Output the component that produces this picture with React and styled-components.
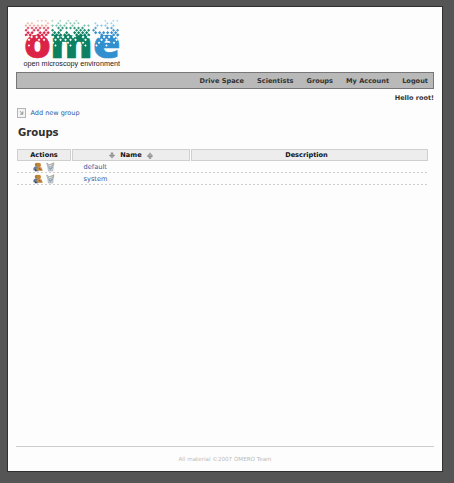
import React from "react";
import styled, { createGlobalStyle } from "styled-components";

const GlobalStyle = createGlobalStyle`
  * { box-sizing: border-box; }
  html, body { margin: 0; background: #555; }
  body { font-family: "DejaVu Sans", Verdana, sans-serif; font-size: 6.6px; color: #333; }
`;
const Page = styled.div`
  width: 454px;
  height: 483px;
  padding: 6px 0 0 7px;
  background: #555;
  overflow: hidden;
`;
const Panel = styled.main`
  width: 436px;
  height: 466px;
  border: 1px solid #303030;
  background: #fdfdfd;
  padding: 9px 8px 0 8px;
  display: flex;
  flex-direction: column;
`;
const LogoArea = styled.header`
  height: 56px;
  padding-left: 4px;
  svg { display: block; overflow: visible; }
`;
const NavBar = styled.nav`
  height: 17px;
  flex: none;
  border: 1px solid #777;
  background: #b9b9b9;
  display: flex;
  justify-content: flex-end;
  align-items: center;
  gap: 13px;
  padding-right: 5px;
`;
const NavLink = styled.a`
  font-size: 6.6px;
  font-weight: bold;
  line-height: 15px;
  padding-top: 1px;
  color: #333;
  white-space: nowrap;
`;
const Greeting = styled.div`
  height: 19px;
  line-height: 18px;
  text-align: right;
  font-size: 6.5px;
  font-weight: bold;
`;
const AddGroup = styled.a`
  display: flex;
  align-items: center;
  gap: 4.5px;
  height: 10px;
  padding-left: 1px;
  font-size: 6.5px;
  color: #2f599f;
`;
const Title = styled.h1`
  margin: 8px 0 0 2px;
  height: 23px;
  line-height: 13px;
  font-size: 10.1px;
  color: #303030;
`;
const Table = styled.section`
  width: 411px;
  margin-left: 1px;
`;
const HeaderRow = styled.div`
  display: grid;
  grid-template-columns: 54px 118px 237px;
  gap: 1px;
`;
const HeaderCell = styled.div`
  height: 12px;
  border: 1px solid #cfcfcf;
  background: #ededed;
  display: flex;
  align-items: center;
  justify-content: center;
  gap: 5px;
  padding-right: ${(p) => p.$shift || 0}px;
  font-weight: bold;
  color: #111;
`;
const Row = styled.div`
  height: 12px;
  display: grid;
  grid-template-columns: 66.6px 1fr;
  align-items: center;
  background: repeating-linear-gradient(90deg, #cdcdcd 0 2px, transparent 2px 4px) left bottom / 100% 1px no-repeat;
`;
const Actions = styled.div`
  display: flex;
  gap: 3px;
  padding-left: 16px;
`;
const GroupLink = styled.a`
  line-height: 10px;
  color: #2f599f;
`;
const Footer = styled.footer`
  margin-top: auto;
  height: 25px;
  border-top: 1px solid #ccc;
  line-height: 24px;
  text-align: center;
  font-size: 5.6px;
  color: #bbb;
`;

const RED = "#dc2346";
const GREEN = "#0c8060";
const BLUE = "#308fce";

const noise = (a, b) => {
  const n = Math.sin(a * 127.1 + b * 311.7) * 43758.5453;
  return n - Math.floor(n);
};

const clusters = [
  { from: 1.5, to: 25.5, color: RED, top: "#ee8872" },
  { from: 28, to: 65, color: GREEN, top: "#45a987" },
  { from: 69, to: 95, color: BLUE, top: "#54b5e6" },
];

function buildPixels() {
  const out = [];
  clusters.forEach((c, k) => {
    for (let r = 0; r < 7; r++) {
      const y = 4 + r * 2.3;
      for (let x = c.from + (r % 2) * 2; x < c.to; x += 4) {
        if (noise(x + k, r) < 0.55 + r * 0.05) {
          const s = 1.7 + r * 0.12;
          out.push({ x, y, s, fill: r < 3 ? c.top : c.color, opacity: Math.min(1, 0.45 + r * 0.11) });
        }
      }
    }
    for (let r = 0; r < 4; r++) {
      for (let x = c.from + 0.6 + (r % 2) * 2.5; x < c.to; x += 5) {
        if (noise(x, r + 30) < 0.85 - r * 0.13) {
          out.push({ x, y: 20 + r * 2.9, s: 2 - r * 0.1, fill: "#fff", opacity: 1 });
        }
      }
    }
  });
  return out;
}
const pixels = buildPixels();

const letter = {
  fontFamily: "Open Sans",
  fontWeight: 800,
  fontSize: 41,
  lengthAdjust: "spacingAndGlyphs",
  strokeWidth: 0.7,
};

function Logo() {
  return (
    <svg width="104" height="54" viewBox="0 0 104 54">
      <text {...letter} x="4" y="42.2" textLength="27" fill={RED} stroke={RED}>o</text>
      <text {...letter} x="30.5" y="42.2" textLength="42" fill={GREEN} stroke={GREEN}>m</text>
      <text {...letter} x="73" y="42.2" textLength="27.5" fill={BLUE} stroke={BLUE}>e</text>
      <g transform="translate(3.5 0)">
        {pixels.map((p, i) => (
          <rect key={i} x={p.x} y={p.y} width={p.s} height={p.s} fill={p.fill} opacity={p.opacity}
            transform={`rotate(45 ${p.x + p.s / 2} ${p.y + p.s / 2})`} />
        ))}
      </g>
      <text x="3.5" y="50" textLength="96.5" lengthAdjust="spacingAndGlyphs" fontFamily="Liberation Sans" fontSize="7.4" fill="#222">
        open microscopy environment
      </text>
    </svg>
  );
}

const AddIcon = () => (
  <svg width="9" height="10" viewBox="0 0 9 10">
    <rect x=".5" y=".5" width="8" height="9" fill="#f4f4f4" stroke="#b5b5b5" />
    <path d="M3 3.2L5.6 6M5.8 3.4V6.2H3.2" fill="none" stroke="#888" strokeWidth=".9" />
  </svg>
);
const PeopleIcon = () => (
  <svg width="10" height="10" viewBox="0 0 10 10">
    <circle cx="3.8" cy="2.7" r="2" fill="#a97835" />
    <path d="M.4 8.2V6.5Q.6 4.4 3 4.2L5.5 5.2V9Z" fill="#6a7c99" />
    <circle cx="5.8" cy="3" r="2.2" fill="#c58431" />
    <path d="M3 8.8L4 6Q6.2 4.3 8.6 5.6L9.8 8.8Z" fill="#c98a40" />
    <path d="M1.6 6.8L5 9.3H2Z" fill="#2c4777" />
    <path d="M6 6L7.8 8.2" stroke="#73582e" strokeWidth=".8" />
  </svg>
);
const TrashIcon = () => (
  <svg width="9" height="10" viewBox="0 0 9 10">
    <path d="M1.6 3.4H7.4L6.8 9H2.4Z" fill="#c9d0d6" stroke="#a0a8ad" strokeWidth=".6" />
    <path d="M.8 1L3 2.8L5 2.2L7.8 .8L7.6 3.2L4 4.4L1.3 3.4Z" fill="#eef1f2" stroke="#8a9298" strokeWidth=".7" />
    <path d="M3 5.3L4.4 7.4L6.6 4.7" fill="none" stroke="#668bad" />
    <path d="M5.4 2.4L7.8 1.8" stroke="#bba855" />
  </svg>
);
const SortIcon = ({ up }) => (
  <svg width="6" height="7" viewBox="0 0 6 7">
    <path d={up ? "M3 .8L5.6 4H4V6.4H2V4H.4Z" : "M3 6.2L.4 3.4H2V.8H4V3.4H5.6Z"} fill="#aaa" stroke="#888" strokeWidth=".5" />
    <path d={up ? "M.4 4.6H5.6" : "M.4 3.4H5.6"} stroke="#888" strokeWidth=".8" />
  </svg>
);

const navItems = ["Drive Space", "Scientists", "Groups", "My Account", "Logout"];
const groups = ["default", "system"];

export default function App() {
  return (
    <>
      <GlobalStyle />
      <Page>
        <Panel>
          <LogoArea><Logo /></LogoArea>
          <NavBar>{navItems.map((n) => <NavLink key={n}>{n}</NavLink>)}</NavBar>
          <Greeting>Hello root!</Greeting>
          <AddGroup><AddIcon />Add new group</AddGroup>
          <Title>Groups</Title>
          <Table>
            <HeaderRow>
              <HeaderCell>Actions</HeaderCell>
              <HeaderCell><SortIcon />Name<SortIcon up /></HeaderCell>
              <HeaderCell $shift={6}>Description</HeaderCell>
            </HeaderRow>
            {groups.map((g) => (
              <Row key={g}>
                <Actions><PeopleIcon /><TrashIcon /></Actions>
                <GroupLink>{g}</GroupLink>
              </Row>
            ))}
          </Table>
          <Footer>All material ©2007 OMERO Team</Footer>
        </Panel>
      </Page>
    </>
  );
}
